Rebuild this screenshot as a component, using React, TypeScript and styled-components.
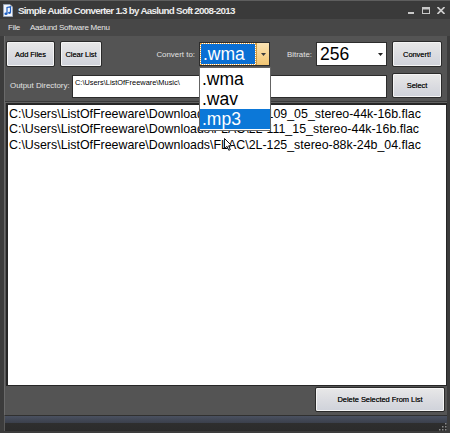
import React from 'react';
import styled, { createGlobalStyle } from 'styled-components';

const Global = createGlobalStyle`
    html, body {
        margin: 0;
        padding: 0;
        background: #3c3c3c;
    }
`;

const Window = styled.div`
    width: 450px;
    height: 433px;
    display: flex;
    flex-direction: column;
    background: #3c3c3c;
    font-family: 'Liberation Sans', Arial, sans-serif;
    overflow: hidden;
`;

const TitleBar = styled.div`
    height: 18px;
    border-top: 1px solid #5e5e5e;
    background: #3a3a3a;
    display: flex;
    align-items: center;
    padding: 0 3px 0 3px;
`;

const Title = styled.span`
    margin-left: 5px;
    color: #ececec;
    font-size: 9.8px;
    font-weight: bold;
    letter-spacing: -0.72px;
    white-space: nowrap;
    flex: 1;
`;

const Controls = styled.div`
    display: flex;
    align-items: center;
    gap: 7px;
    padding-right: 2px;
`;

const MenuBar = styled.div`
    height: 17px;
    background: #474747;
    display: flex;
    align-items: center;
    padding-left: 8px;
    gap: 10px;
`;

const MenuItem = styled.span`
    color: #e6e6e6;
    font-size: 8px;
    letter-spacing: -0.25px;
`;

const Frame = styled.div`
    flex: 1;
    margin: 0 3px 2px 4px;
    display: flex;
    flex-direction: column;
    min-height: 0;
`;

const Body = styled.div`
    flex: 1;
    min-height: 0;
    display: flex;
    flex-direction: column;
    background: #545454;
    border-left: 1px solid #6a6a6a;
    border-bottom: 1px solid #303030;
    padding: 5px 0 0 0;
`;

const Row = styled.div<{ $top?: number; $height: number }>`
    display: flex;
    align-items: center;
    height: ${(p) => p.$height}px;
    margin-top: ${(p) => p.$top ?? 0}px;
    padding-left: 1px;
`;

const Button = styled.button<{ $w: number; $h?: number; $ml?: number }>`
    width: ${(p) => p.$w}px;
    height: ${(p) => p.$h ?? 26}px;
    margin-left: ${(p) => p.$ml ?? 0}px;
    padding: 0;
    border: 1px solid #2a2a2a;
    border-radius: 2px;
    background: linear-gradient(#e8e8e8, #dadbe0 55%, #cfd2da);
    box-shadow: inset 0 0 0 1px #f4f4f4;
    color: #151515;
    font-family: 'Liberation Sans', Arial, sans-serif;
    font-size: 7.5px;
    letter-spacing: -0.05px;
    text-shadow: 0 0 0.6px #333;
    cursor: default;
`;

const Label = styled.span<{ $w: number; $ml?: number; $align?: string }>`
    width: ${(p) => p.$w}px;
    margin-left: ${(p) => p.$ml ?? 0}px;
    text-align: ${(p) => p.$align ?? 'right'};
    color: #e2e2e2;
    font-size: 7.9px;
    white-space: nowrap;
`;

const Combo = styled.div<{ $ml: number }>`
    position: relative;
    width: 71px;
    height: 24px;
    margin-left: ${(p) => p.$ml}px;
    box-sizing: border-box;
    border: 1px solid #2c2c2c;
    background: #fff;
    display: flex;
    align-items: stretch;
`;

const ComboValue = styled.div<{ $focused?: boolean }>`
    flex: 1;
    margin: 1px;
    padding-left: 2px;
    display: flex;
    align-items: center;
    font-size: 17.5px;
    color: ${(p) => (p.$focused ? '#fff' : '#000')};
    background: ${(p) => (p.$focused ? '#0a6fd4' : '#fff')};
    outline: ${(p) => (p.$focused ? '1px dotted #e9a23a' : 'none')};
`;

const ArrowBox = styled.div<{ $hot?: boolean }>`
    width: 12px;
    display: flex;
    align-items: center;
    justify-content: center;
    background: ${(p) => (p.$hot ? 'linear-gradient(#fbe3b3, #f2c673)' : '#fff')};
    border-left: ${(p) => (p.$hot ? '1px solid #c99a45' : 'none')};
`;

const Popup = styled.div`
    position: absolute;
    top: 24px;
    left: -1px;
    width: 72px;
    box-sizing: border-box;
    border: 1px solid #646464;
    background: #fff;
    z-index: 5;
    padding: 1px 0;
`;

const Option = styled.div<{ $selected?: boolean }>`
    height: 20px;
    line-height: 20px;
    padding-left: 2px;
    font-size: 17.5px;
    color: ${(p) => (p.$selected ? '#fff' : '#000')};
    background: ${(p) => (p.$selected ? '#0c78d8' : '#fff')};
`;

const PathInput = styled.div`
    width: 315px;
    height: 23px;
    box-sizing: border-box;
    border: 1px solid #2c2c2c;
    background: #fff;
    padding: 2px 2px;
    font-size: 7.4px;
    color: #000;
    align-self: flex-end;
`;

const Separator = styled.div`
    margin-top: 3px;
    height: 1px;
    border-top: 1px solid #3a3a3a;
    background: #626262;
`;

const ListBox = styled.div`
    position: relative;
    flex: 1;
    min-height: 0;
    margin-left: 1px;
    background: #fff;
    border: 1px solid #262626;
    border-top-width: 2px;
    border-left-width: 2px;
    padding: 2px 0 0 1px;
    font-size: 12.4px;
    line-height: 15.4px;
    color: #000;
`;

const FileLine = styled.div`
    white-space: nowrap;
`;

const Cursor = styled.svg`
    position: absolute;
    left: 216px;
    top: 33px;
`;

const Footer = styled.div`
    height: 28px;
    display: flex;
    justify-content: flex-end;
    align-items: flex-start;
    padding: 1px 2px 0 0;
`;

const StatusBar = styled.div`
    height: 15px;
    display: flex;
    justify-content: flex-end;
    align-items: flex-end;
    background: linear-gradient(#4a5160, #3b404c 45%, #2e2e2e 50%, #2b2b2b);
    border-left: 1px solid #5a5a5a;
`;

const files = [
    'C:\\Users\\ListOfFreeware\\Downloads\\FLAC\\2L-109_05_stereo-44k-16b.flac',
    'C:\\Users\\ListOfFreeware\\Downloads\\FLAC\\2L-111_15_stereo-44k-16b.flac',
    'C:\\Users\\ListOfFreeware\\Downloads\\FLAC\\2L-125_stereo-88k-24b_04.flac',
];

const AppIcon = () => (
    <svg width="10" height="13" viewBox="0 0 10 13">
        <path d="M0.5 0.5 H7 L9.5 3 V12.5 H0.5 Z" fill="#f4f6fa" stroke="#9aa6b8" />
        <path d="M4 9.5 V3.5 L7.5 2.8 V8.5" fill="none" stroke="#1d5fc4" strokeWidth="1.2" />
        <ellipse cx="3" cy="9.7" rx="1.6" ry="1.2" fill="#1d5fc4" />
        <ellipse cx="6.5" cy="8.8" rx="1.5" ry="1.1" fill="#1d5fc4" />
    </svg>
);

const Arrow = ({ color }: { color: string }) => (
    <svg width="5" height="3" viewBox="0 0 5 3">
        <path d="M0 0 H5 L2.5 3 Z" fill={color} />
    </svg>
);

export default function App() {
    return (
        <Window>
            <Global />
            <TitleBar>
                <AppIcon />
                <Title>Simple Audio Converter 1.3 by Aaslund Soft 2008-2013</Title>
                <Controls>
                    <svg width="7" height="7" viewBox="0 0 7 7">
                        <rect x="0" y="5" width="6" height="2" fill="#c8c8c8" />
                    </svg>
                    <svg width="8" height="7" viewBox="0 0 8 7">
                        <rect x="0.5" y="0.5" width="7" height="6" fill="none" stroke="#c8c8c8" />
                        <rect x="0.5" y="0.5" width="7" height="2" fill="#c8c8c8" />
                    </svg>
                    <svg width="8" height="7" viewBox="0 0 8 7">
                        <path d="M0.5 0 L7.5 7 M7.5 0 L0.5 7" stroke="#cfcfcf" strokeWidth="1.6" />
                    </svg>
                </Controls>
            </TitleBar>
            <MenuBar>
                <MenuItem>File</MenuItem>
                <MenuItem>Aaslund Software Menu</MenuItem>
            </MenuBar>
            <Frame>
                <Body>
                    <Row $height={26}>
                        <Button $w={49}>Add Files</Button>
                        <Button $w={42} $ml={5}>Clear List</Button>
                        <Label $w={45} $ml={48}>Convert to:</Label>
                        <Combo $ml={4}>
                            <ComboValue $focused>.wma</ComboValue>
                            <ArrowBox $hot>
                                <Arrow color="#3a3a3a" />
                            </ArrowBox>
                            <Popup>
                                <Option>.wma</Option>
                                <Option>.wav</Option>
                                <Option $selected>.mp3</Option>
                            </Popup>
                        </Combo>
                        <Label $w={40} $ml={2}>Bitrate:</Label>
                        <Combo $ml={4}>
                            <ComboValue>256</ComboValue>
                            <ArrowBox>
                                <Arrow color="#222" />
                            </ArrowBox>
                        </Combo>
                        <Button $w={50} $ml={5}>Convert!</Button>
                    </Row>
                    <Row $height={25} $top={6}>
                        <Label $w={62} $ml={4} $align="left">Output Directory:</Label>
                        <PathInput>C:\Users\ListOfFreeware\Music\</PathInput>
                        <Button $w={50} $h={25} $ml={5}>Select</Button>
                    </Row>
                    <Separator />
                    <ListBox>
                        {files.map((f) => (
                            <FileLine key={f}>{f}</FileLine>
                        ))}
                        <Cursor width="9" height="13" viewBox="0 0 9 13">
                            <path d="M0.5 0.5 V10.5 L3 8.3 L4.8 12.3 L6.3 11.6 L4.6 7.8 H7.8 Z" fill="#fff" stroke="#000" strokeWidth="0.9" />
                        </Cursor>
                    </ListBox>
                    <Footer>
                        <Button $w={130} $h={25}>Delete Selected From List</Button>
                    </Footer>
                </Body>
                <StatusBar>
                    <svg width="8" height="8" viewBox="0 0 8 8">
                        <g fill="#8a8a8a">
                            <rect x="6" y="0" width="1.5" height="1.5" />
                            <rect x="3" y="3" width="1.5" height="1.5" />
                            <rect x="6" y="3" width="1.5" height="1.5" />
                            <rect x="0" y="6" width="1.5" height="1.5" />
                            <rect x="3" y="6" width="1.5" height="1.5" />
                            <rect x="6" y="6" width="1.5" height="1.5" />
                        </g>
                    </svg>
                </StatusBar>
            </Frame>
        </Window>
    );
}
